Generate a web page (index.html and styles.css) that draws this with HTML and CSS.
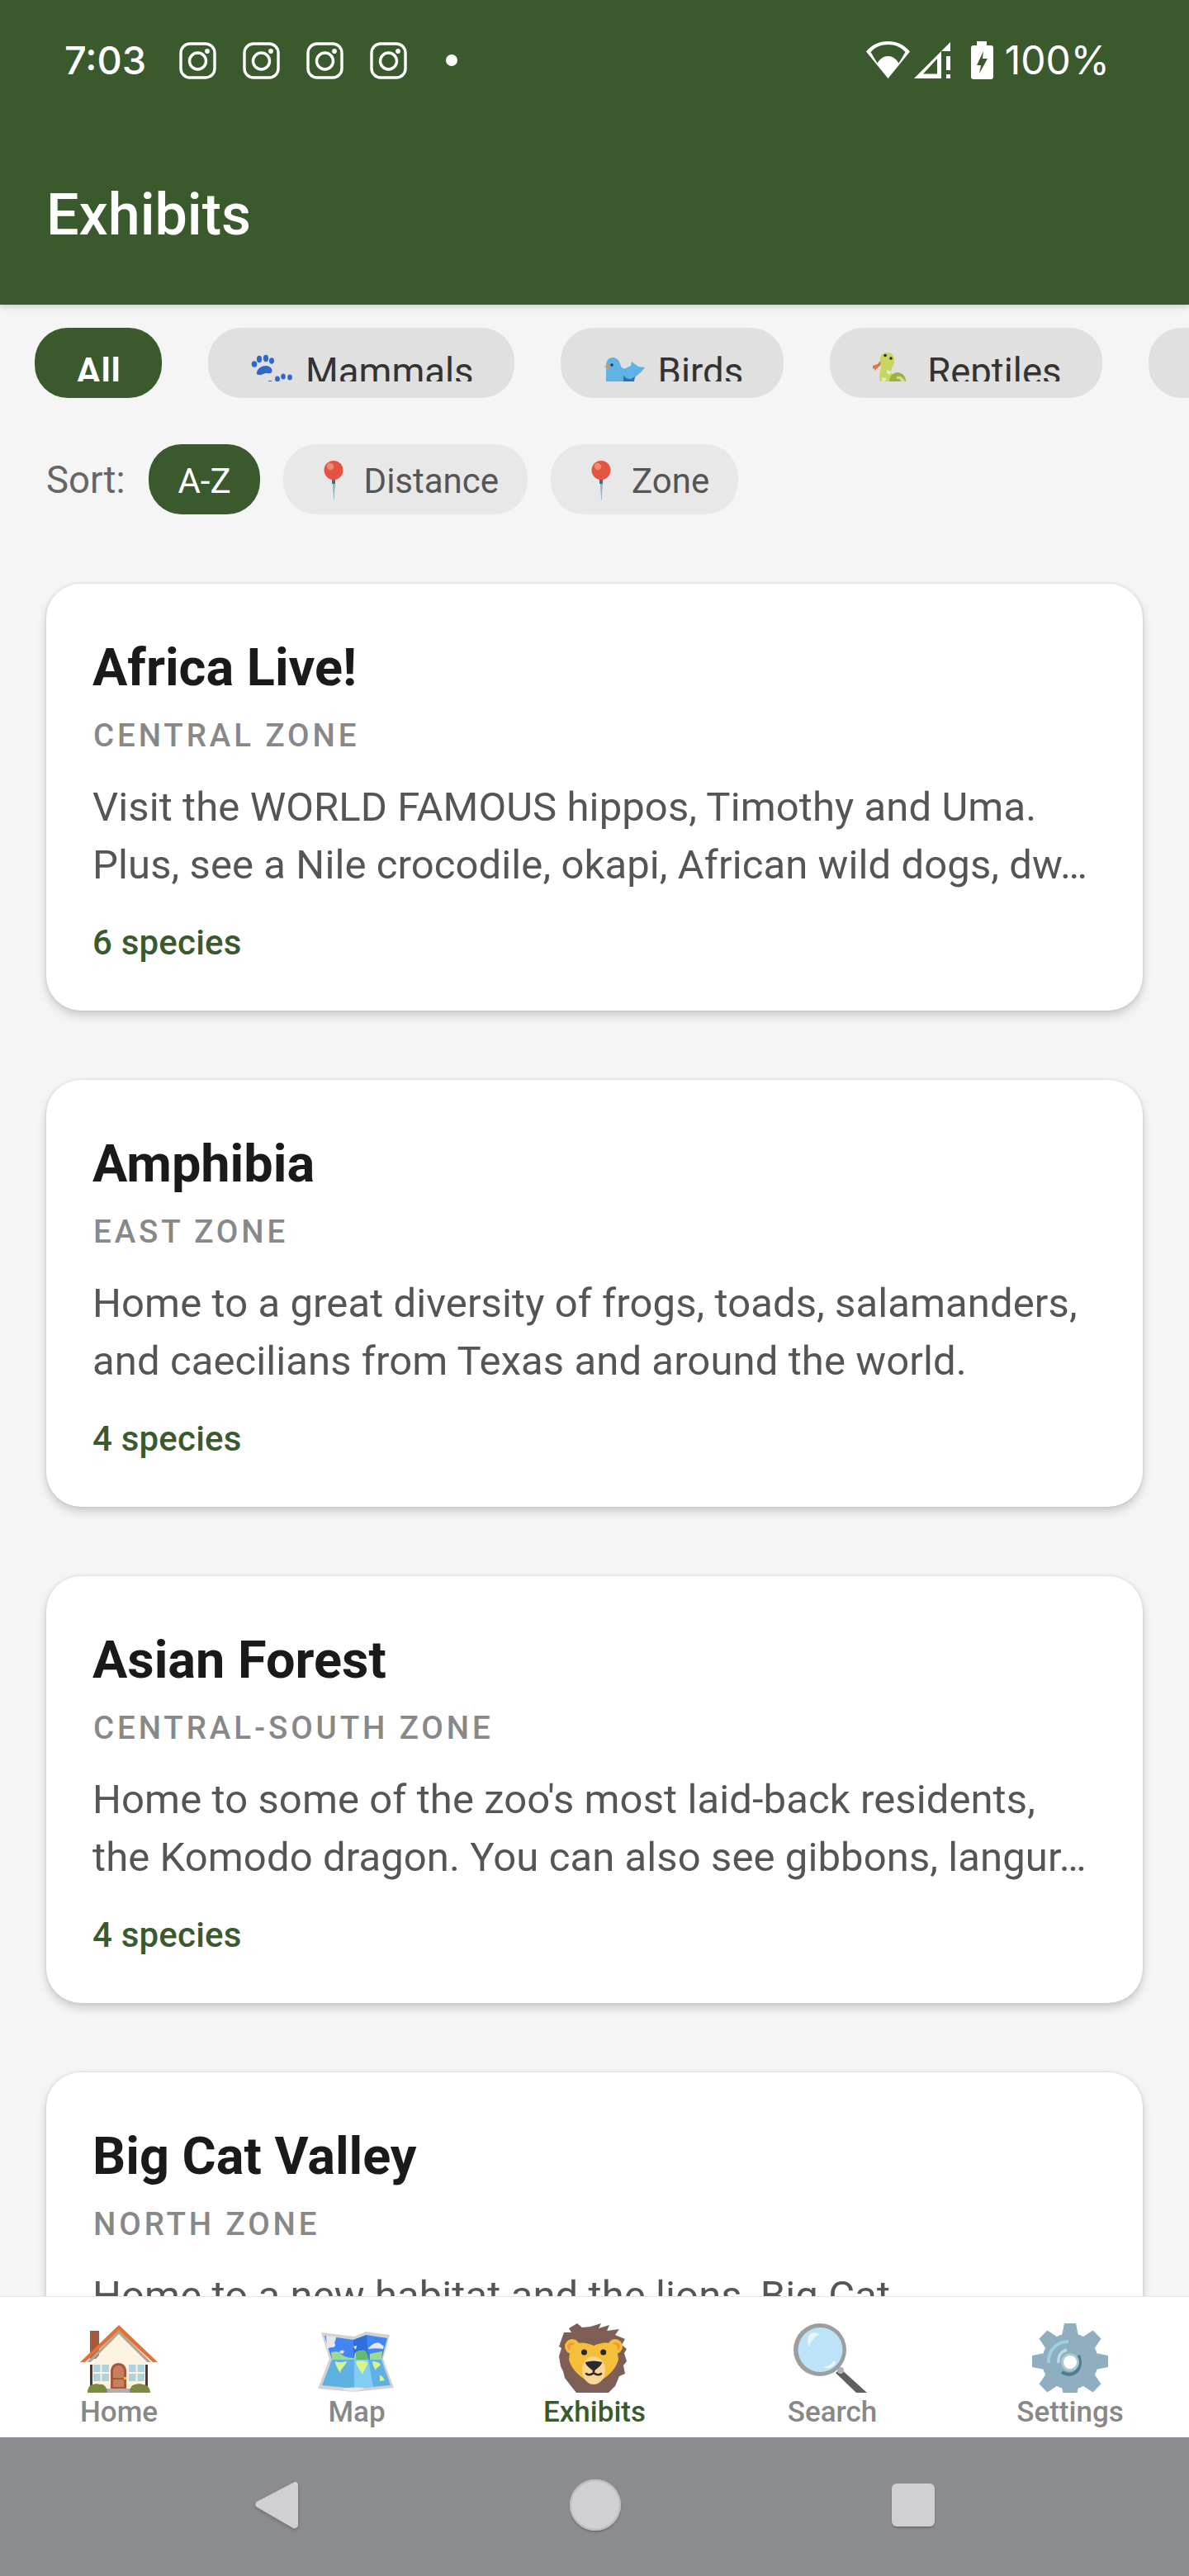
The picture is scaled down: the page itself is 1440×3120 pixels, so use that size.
FILE: index.html
```html
<!DOCTYPE html>
<html lang="en">
<head>
<meta charset="utf-8">
<title>Exhibits</title>
<link rel="stylesheet" href="styles.css">
</head>
<body>
<svg class="defs" width="0" height="0" aria-hidden="true">
  <symbol id="ig" viewBox="0 0 45 45">
    <rect x="2" y="2" width="41" height="41" rx="11" fill="none" stroke="#fff" stroke-width="3.4"/>
    <circle cx="22.5" cy="23" r="10" fill="none" stroke="#fff" stroke-width="3.4"/>
    <circle cx="34" cy="11" r="2.9" fill="#fff"/>
  </symbol>
  <symbol id="pin" viewBox="0 0 52 48">
    <path d="M24.6 21h2.8l.6 6-1.4 21h-.4l-1.4-21z" fill="#8FB4C6"/>
    <rect x="24" y="21" width="4" height="7" fill="#3F7488"/>
    <ellipse cx="26" cy="11.5" rx="11.5" ry="11.5" fill="#E45442"/>
    <ellipse cx="22" cy="7" rx="4.5" ry="4" transform="rotate(35 22 7)" fill="#F08A6C"/>
  </symbol>
</svg>
<div class="app">
  <header class="header">
    <div class="status">
      <div class="status-left">
        <span class="clock">7:03</span>
        <div class="notifs">
          <svg class="ig"><use href="#ig"/></svg>
          <svg class="ig"><use href="#ig"/></svg>
          <svg class="ig"><use href="#ig"/></svg>
          <svg class="ig"><use href="#ig"/></svg>
          <span class="dot"></span>
        </div>
      </div>
      <div class="status-right">
        <svg class="wifi" viewBox="0 0 53 45"><path fill="#fff" fill-rule="evenodd" d="M26.5 45 0 12.6C7 4 16 0 26.5 0S46 4 53 12.6L26.500 45zM5.500 13C11 7 18 4 26.500 4S42 7 47.500 13l-8 13.500C36 21 32 18 26.500 18s-9.500 3-13 8.500z"/></svg>
        <svg class="signal" viewBox="0 0 44 44"><path fill="#fff" fill-rule="evenodd" d="M0 44 44 0v11H33v33zM11 38.500h17V20z"/><rect x="39" y="17" width="5" height="17" fill="#fff"/><rect x="39" y="39" width="5" height="5" fill="#fff"/></svg>
        <svg class="battery" viewBox="0 0 27 46"><path fill="#fff" fill-rule="evenodd" d="M7 0h12v5h5a3 3 0 0 1 3 3v35a3 3 0 0 1-3 3H3a3 3 0 0 1-3-3V8a3 3 0 0 1 3-3h4zM15 12 7 29h5l-2 10 10-18h-6z"/></svg>
        <span class="battery-pct">100%</span>
      </div>
    </div>
    <h1 class="title">Exhibits</h1>
  </header>

  <main class="main">
    <nav class="chips">
      <div class="chip chip-on"><div class="chip-label">All</div></div>
      <div class="chip"><div class="chip-label">
        <svg class="chip-emoji" viewBox="0 0 57 38"><g fill="#3069C9"><path d="M10 27c1-5 6-8 11-8s9 4 7 8c-1 2-4 1-6 1-4 0-6 3-9 2-2 0-4-1-3-3z"/><ellipse cx="7" cy="17" rx="3.300" ry="3.700"/><ellipse cx="13" cy="11" rx="3.100" ry="4.200"/><ellipse cx="21" cy="10" rx="3.100" ry="4.200"/><ellipse cx="28" cy="13" rx="3" ry="3.700"/><ellipse cx="35" cy="35" rx="3" ry="3.500"/><ellipse cx="42" cy="32" rx="2.800" ry="3.500"/><ellipse cx="50" cy="33" rx="2.800" ry="3.500"/><rect x="24" y="37" width="4" height="1"/></g></svg>
        <span>Mammals</span></div></div>
      <div class="chip"><div class="chip-label">
        <svg class="chip-emoji" viewBox="0 0 57 38"><path d="M6 38V19c0-6 3-10 8-10 6 0 9 5 10 11 2 3 5 3 8 1l4-2 1-5 8 6 8 1c-3 5-8 8-12 12-2 2-3 5-6 5z" fill="#5FB3E3"/><path d="M9 17 4 20l5 3z" fill="#F0913A"/><circle cx="13" cy="18" r="1.700" fill="#22313A"/><path d="M27 30c2 4 5 5 9 5l5-3-1 6H27z" fill="#2B73B8"/></svg>
        <span>Birds</span></div></div>
      <div class="chip"><div class="chip-label">
        <svg class="chip-emoji" viewBox="0 0 57 38"><path d="M3 19l6-2 3-4 2 2-2 4-4 3-2 3-1-3-2 1z" fill="#E8743B"/><path d="M12 10C12 5 17 3 21 3c5 0 9 4 8 11-1 6-5 9-3 14 1 3 4 4 6 10H12c-2-6 0-12 1-17 0-4-1-7-1-11z" fill="#C6D661"/><path d="M20 24l6 2-2 4-4-2zM14 33l6 1-2 4h-4z" fill="#E5EBA8"/><circle cx="33" cy="37" r="10" fill="#9DB23F"/><path d="M32 32c4-1 9 2 10 6h-5c0-3-2-4-5-3z" fill="#D5DF8C"/><circle cx="18" cy="6.500" r="1.800" fill="#2B2B2B"/><circle cx="25" cy="10" r="1.800" fill="#2B2B2B"/></svg>
        <span>Reptiles</span></div></div>
      <div class="chip"><div class="chip-label"><span>Amphibians</span></div></div>
    </nav>

    <div class="sort">
      <span class="sort-label">Sort:</span>
      <div class="pill pill-on">A-Z</div>
      <div class="pill"><svg class="pin"><use href="#pin"/></svg><span>Distance</span></div>
      <div class="pill"><svg class="pin"><use href="#pin"/></svg><span>Zone</span></div>
    </div>

    <section class="list">
      <article class="card">
        <h2 class="card-title">Africa Live!</h2>
        <div class="card-zone">CENTRAL ZONE</div>
        <p class="card-desc">Visit the WORLD FAMOUS hippos, Timothy and Uma. Plus, see a Nile crocodile, okapi, African wild dogs, dw…</p>
        <div class="card-count">6 species</div>
      </article>
      <article class="card">
        <h2 class="card-title">Amphibia</h2>
        <div class="card-zone">EAST ZONE</div>
        <p class="card-desc">Home to a great diversity of frogs, toads, salamanders, and caecilians from Texas and around the world.</p>
        <div class="card-count">4 species</div>
      </article>
      <article class="card">
        <h2 class="card-title">Asian Forest</h2>
        <div class="card-zone">CENTRAL-SOUTH ZONE</div>
        <p class="card-desc">Home to some of the zoo's most laid-back residents, the Komodo dragon. You can also see gibbons, langur…</p>
        <div class="card-count">4 species</div>
      </article>
      <article class="card">
        <h2 class="card-title">Big Cat Valley</h2>
        <div class="card-zone">NORTH ZONE</div>
        <p class="card-desc">Home to a new habitat and the lions, Big Cat<br>Country, plus tigers and jaguars.</p>
        <div class="card-count">3 species</div>
      </article>
    </section>
  </main>

  <nav class="tabs">
    <div class="tab">
      <svg class="tab-icon" viewBox="0 0 96 84">
        <rect x="13" y="9" width="11" height="34" fill="#A5583A"/>
        <path d="M48 10 14 50v34h68V50z" fill="#FDF3E3"/>
        <rect x="13" y="50" width="3" height="30" fill="#4D3B33"/><rect x="80" y="50" width="3" height="30" fill="#4D3B33"/>
        <path d="M48 2 1 47h6l41-38 41 38h6z" fill="#E2703A"/>
        <path d="M48 8 9 47h5l34-34 34 34h5z" fill="#B5A78F"/>
        <g fill="#B0D2DA"><rect x="17" y="50" width="8.500" height="9"/><rect x="27.500" y="50" width="8.500" height="9"/><rect x="17" y="61" width="8.500" height="9"/><rect x="27.500" y="61" width="8.500" height="9"/><rect x="60" y="50" width="8.500" height="9"/><rect x="70.500" y="50" width="8.500" height="9"/><rect x="60" y="61" width="8.500" height="9"/><rect x="70.500" y="61" width="8.500" height="9"/></g>
        <path d="M38 79V58c0-6 4-10 9.500-10S57 52 57 58v21z" fill="#A5583A"/>
        <path d="M41 66V58c0-4 3-7 6.500-7S54 54 54 58v8z" fill="#C87F5F"/><rect x="41" y="68" width="13" height="9" fill="#C87F5F"/>
        <rect x="54" y="65" width="3" height="3" fill="#F5C32C"/>
        <rect x="33" y="79" width="30" height="5" fill="#AEAEAE"/>
        <path d="M10 84c0-6 3-10 7-10 2-1 6-1 8 0 5-1 9 4 9 10zM61 84c0-6 3-10 7-10 2-1 7-1 9 0 5 0 9 4 9 10z" fill="#7C8A40"/>
      </svg>
      <span class="tab-label">Home</span>
    </div>
    <div class="tab">
      <svg class="tab-icon" viewBox="0 0 96 84">
        <path d="M5 11 45 16 59 10 88 14 80 43 93 78 45 83 1 79 15 43z" fill="#D2D2D2"/>
        <path d="M9 15 44 20 60 14 85 18 78 44H18z" fill="#4285F4"/>
        <path d="M44 20 60 14 62 44H44z" fill="#2F6FDB"/>
        <path d="M18 44H78L89 75 45 79 6 75z" fill="#5EB1E2"/>
        <path d="M45 44H62L68 77 45 79z" fill="#82CDF6"/>
        <path d="M17 35c3-1 7-1 10 0 3 4 9 7 17 7v2H18zM46 36c3-3 8-4 12-3 2 2 3 7 4 11H44zM64 37c4-1 8-2 15-3l-1 10H64z" fill="#99DC92"/>
        <path d="M47 36c3-3 7-4 11-3l4 11H47z" fill="#66BB6A"/>
        <path d="M12 32c2-3 5-3 8-3 2-1 3-3 1-5 1-3 2-5 2-8l-12-1zM27 35c2-3 4-3 6-1l-2 3zM62 30c4-3 7-8 14-6l5 4-1 3c-6-1-12-1-18 0zM44 28l4-1-1 5z" fill="#E8E8E8"/>
        <path d="M22 46c4 2 9 1 14 0-1 5-7 8-8 14-3-5-6-10-6-14zM47 46c4-1 10-1 14 1 1 4-4 9-6 15-3-5-7-10-8-16zM67 46c4 0 8 1 10 4-2 3-5 3-6 7-2-3-4-7-4-11zM76 63c3 0 4 3 6 6l-6 1z" fill="#D6F58C"/>
        <path d="M30 80c8-3 20-3 28-1l-13 4z" fill="#E6E6E6"/>
      </svg>
      <span class="tab-label">Map</span>
    </div>
    <div class="tab tab-on">
      <svg class="tab-icon" viewBox="0 0 96 84">
        <path d="M17 6 27 0 33 5 43 4 56 0 53 6 66 2 63 9 78 7 73 14 85 19 81 26 87 31 84 36 87 46 83 51 85 61 78 64 73 76 65 84H26L18 74 12 66 10 58 7 52 5 40 8 30 5 28 11 11 20 11z" fill="#7F5F55"/>
        <circle cx="21" cy="28" r="9" fill="#F6BF3A"/><circle cx="73" cy="28" r="9" fill="#F6BF3A"/>
        <circle cx="20" cy="28" r="5" fill="#F2993A"/><circle cx="74" cy="28" r="5" fill="#F2993A"/>
        <path d="M19 27Q32 20 47 27 62 20 75 27L77 44Q72 62 47 74 22 62 17 44Z" fill="#F6BF3A"/>
        <circle cx="35.500" cy="35" r="3.500" fill="#2A2A2A"/><circle cx="58.700" cy="35" r="3.500" fill="#2A2A2A"/>
        <ellipse cx="47" cy="57" rx="14" ry="17" fill="#FAD595"/>
        <path d="M37 47Q47 44 57 47 58 50 47 58 36 50 37 47z" fill="#2A2A2A"/>
        <path d="M47 56V60Q42 64 38 61M47 60Q52 64 56 61" fill="none" stroke="#2A2A2A" stroke-width="2.500" stroke-linecap="round"/>
      </svg>
      <span class="tab-label">Exhibits</span>
    </div>
    <div class="tab">
      <svg class="tab-icon" viewBox="0 0 96 84">
        <path d="M58 55 90 84H77L52 60z" fill="#5F5F5F"/>
        <circle cx="58" cy="57" r="4" fill="#B0B0B0"/>
        <circle cx="33" cy="32" r="32" fill="#9E9E9E"/>
        <circle cx="33.500" cy="32" r="27" fill="#BCE3F8"/>
        <path d="M22 12c6-2 10 0 10 2-5 1-10 8-12 14-3-4-2-13 2-16zM36 53c6 0 12-4 14-8 2 1 2 3 1 5-3 4-10 6-15 3z" fill="#EAF6FD"/>
      </svg>
      <span class="tab-label">Search</span>
    </div>
    <div class="tab">
      <svg class="tab-icon" viewBox="0 0 96 84">
        <defs><path id="tooth" d="M-7-46H7L11-26H-11z"/></defs>
        <g transform="translate(48 46)" fill="#8FAEC0">
          <circle r="34"/>
          <use href="#tooth"/><use href="#tooth" transform="rotate(45)"/><use href="#tooth" transform="rotate(90)"/><use href="#tooth" transform="rotate(135)"/><use href="#tooth" transform="rotate(180)"/><use href="#tooth" transform="rotate(225)"/><use href="#tooth" transform="rotate(270)"/><use href="#tooth" transform="rotate(315)"/>
        </g>
        <path d="M22 48c-1-14 9-26 24-26" fill="none" stroke="#9BD0DD" stroke-width="4"/>
        <path d="M34 48c-1-8 3-14 10-16" fill="none" stroke="#B7DCE4" stroke-width="3.500"/>
        <path d="M38 59c9 6 22 2 22-12 0-3-1-6-2-8" fill="none" stroke="#4E7E92" stroke-width="4"/>
        <circle cx="48" cy="47" r="11" fill="#A9C8D4"/>
        <circle cx="48" cy="47" r="8" fill="#fff"/>
      </svg>
      <span class="tab-label">Settings</span>
    </div>
  </nav>

  <footer class="sysnav">
    <svg class="sys-back" viewBox="0 0 52 58"><path d="M47 1.500 2 25a4 4 0 0 0 0 6.500L46 57c3 1 6-1 6-4V5c0-3-2-5-5-3.500z" fill="#D0D0D3"/></svg>
    <span class="sys-home"></span>
    <span class="sys-recent"></span>
  </footer>
</div>
</body>
</html>
```
FILE: styles.css
```css
* { box-sizing: border-box; }
html, body { margin: 0; padding: 0; }
body { background: #f5f5f5; font-family: Roboto, "Noto Sans", sans-serif; }
.defs { position: absolute; }
.app { width: 1440px; height: 3120px; display: flex; flex-direction: column; overflow: hidden; }

.header { height: 369px; flex: none; background: #3a5a2e; color: #fff; padding-top: 50px; box-shadow: 0 2px 8px rgba(0,0,0,.18); position: relative; z-index: 2; }
.status { display: flex; justify-content: space-between; padding: 0 96px 0 78px; height: 46px; align-items: flex-start; }
.status-left, .status-right, .notifs { display: flex; align-items: flex-start; }
.clock { font-family: Inter, sans-serif; font-size: 47px; line-height: 46px; font-weight: 500; width: 139px; }
.notifs { gap: 32px; }
.ig { width: 45px; height: 45px; margin-top: 1px; display: block; }
.dot { width: 14px; height: 14px; border-radius: 50%; background: #fff; margin: 16px 0 0 15px; }
.wifi { width: 53px; height: 45px; display: block; }
.signal { width: 44px; height: 44px; margin: 1px 0 0 5px; display: block; }
.battery { width: 27px; height: 46px; margin-left: 25px; display: block; }
.battery-pct { font-family: Inter, sans-serif; font-size: 48px; line-height: 46px; margin-left: 14px; font-weight: 400; }
.title { margin: 123px 0 0 56px; font-size: 70px; line-height: 82px; font-weight: 500; }

.main { flex: 1; min-height: 0; overflow: hidden; }
.chips { display: flex; gap: 56px; padding: 28px 0 0 42px; overflow: hidden; }
.chip { flex: none; height: 85px; padding: 27px 49px 0; border-radius: 40px; background: #e0e0e0; color: #333; font-size: 45.5px; }
.chip-on { background: #3a5a2e; color: #fff; font-weight: 600; padding: 27px 50px 0; }
.chip-label { display: flex; gap: 12px; height: 38px; overflow: hidden; line-height: normal; }
.chip-emoji { width: 57px; height: 38px; flex: none; display: block; }

.sort { display: flex; align-items: center; gap: 28px; padding-left: 56px; margin-top: 56px; }
.sort-label { font-size: 45.5px; color: #666; padding-top: 2px; margin-right: 1px; }
.pill { height: 85px; padding: 3px 35px 0; border-radius: 40px; background: #e8e8e8; color: #555; font-size: 42px; display: flex; align-items: center; gap: 11px; }
.pill-on { background: #3a5a2e; color: #fff; }
.pin { width: 52px; height: 48px; display: block; flex: none; }

.list { padding: 84px 56px 0; display: flex; flex-direction: column; gap: 84px; }
.card { height: 517px; flex: none; background: #fff; border-radius: 42px; padding: 63px 56px 0; box-shadow: 0 6px 12px rgba(0,0,0,.17), 0 0 4px rgba(0,0,0,.1); }
.card-title { margin: 0; font-size: 63px; line-height: 77px; font-weight: 700; color: #1a1a1a; }
.card-zone { margin-top: 21px; margin-left: 1px; font-size: 38.5px; font-weight: 500; letter-spacing: 3.9px; line-height: 45px; color: #888; }
.card-desc { margin: 30px 0 0; font-size: 49px; line-height: 70px; color: #555; letter-spacing: .1px; }
.card-count { margin-top: 34px; font-size: 42px; font-weight: 500; line-height: 49px; color: #3a5a2e; letter-spacing: .2px; }

.tabs { flex: none; height: 171px; background: #fff; border-top: 1px solid #e6e6e6; display: grid; grid-template-columns: repeat(5, 1fr); padding-top: 32px; position: relative; z-index: 2; }
.tab { display: flex; flex-direction: column; align-items: center; color: #888; }
.tab-on { color: #3a5a2e; }
.tab-icon { width: 96px; height: 84px; display: block; }
.tab-label { font-size: 35px; line-height: 41px; font-weight: 500; margin-top: 3px; }

.sysnav { flex: none; height: 168px; background: #8b8c90; display: flex; align-items: center; justify-content: center; }
.sys-back { width: 52px; height: 58px; filter: drop-shadow(0 2px 2px rgba(0,0,0,.2)); margin-right: 329px; margin-top: -4px; }
.sys-home { width: 62px; height: 62px; border-radius: 50%; background: #d0d0d3; box-shadow: 0 2px 2px rgba(0,0,0,.2), inset 0 0 0 2px #bdbdc0; margin-top: -4px; }
.sys-recent { width: 52px; height: 52px; border-radius: 6px; background: #d0d0d3; box-shadow: 0 2px 2px rgba(0,0,0,.2); margin-left: 328px; margin-top: -4px; }
```
